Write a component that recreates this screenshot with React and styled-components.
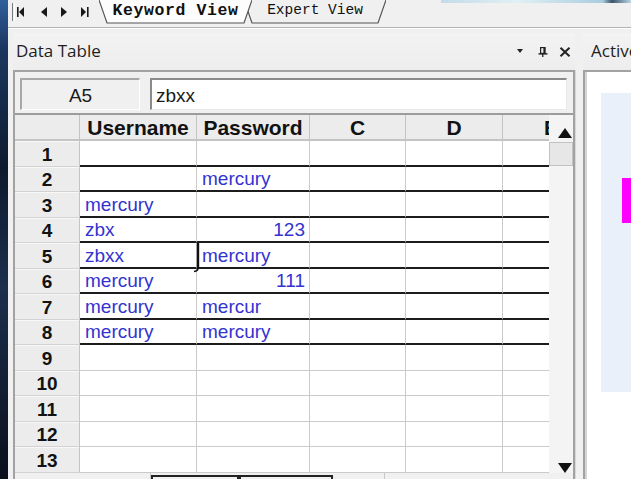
import React from "react";
import styled, { createGlobalStyle } from "styled-components";

const GlobalStyle = createGlobalStyle`
  html, body {
    margin: 0;
    padding: 0;
    overflow: hidden;
    background: #f0f0f0;
  }
  * {
    box-sizing: border-box;
  }
`;

const COLS = ["Username", "Password", "C", "D", "E"];
const ROWS = [
  ["", ""],
  ["", "mercury"],
  ["mercury", ""],
  ["zbx", "123"],
  ["zbxx", "mercury"],
  ["mercury", "111"],
  ["mercury", "mercur"],
  ["mercury", "mercury"],
  ["", ""],
  ["", ""],
  ["", ""],
  ["", ""],
  ["", ""],
];

const Screen = styled.div`
  display: flex;
  width: 631px;
  height: 479px;
  overflow: hidden;
  font-family: "Liberation Sans", Arial, sans-serif;
`;

const DesktopEdge = styled.div`
  flex: 0 0 8px;
  width: 8px;
  min-width: 8px;
  background: linear-gradient(180deg, #30609c 0%, #1b3760 10%, #0d1a2e 35%, #1c2f4c 60%, #0a101c 100%);
`;

const Window = styled.div`
  flex: 1;
  min-width: 0;
  display: flex;
  flex-direction: column;
  background: #f0f0f0;
`;

/* ---------- view tabs ---------- */

const TabBar = styled.div`
  flex: none;
  height: 27px;
  display: flex;
  align-items: flex-start;
  padding-left: 4px;
`;

const Grip = styled.div`
  width: 3px;
  height: 18px;
  margin-top: 3px;
  border-left: 1px solid #7a7a7a;
  border-right: 1px solid #ffffff;
`;

const NavGroup = styled.div`
  display: flex;
  align-items: center;
  gap: 14px;
  height: 24px;
  margin-left: 2px;
  padding-bottom: 1px;

  svg:first-child {
    margin-right: 3px;
  }
`;

const ViewTab = styled.div`
  position: relative;
  flex: none;
  width: ${(p) => p.$width}px;
  height: 24px;
  margin-left: ${(p) => p.$offset}px;
  z-index: ${(p) => (p.$active ? 2 : 1)};
  display: flex;
  justify-content: center;
  padding-top: 1px;
  font-family: "Liberation Mono", "Courier New", monospace;
  font-size: ${(p) => (p.$active ? "16.5px" : "14.5px")};
  font-weight: ${(p) => (p.$active ? 700 : 400)};
  letter-spacing: ${(p) => (p.$active ? "0.6px" : "0")};
  line-height: 19px;
  color: #111;

  svg {
    position: absolute;
    inset: 0;
    z-index: -1;
  }
`;

const ClippedToolbar = styled.div`
  margin-left: auto;
  width: 190px;
  height: 3px;
  background: linear-gradient(90deg, #c4dbe9, #e0f0f4 40%, #a9cde0 85%, #40546a 90%, #b8d8e6);
`;

const Band = styled.div`
  flex: none;
  height: 6px;
  border-top: 1px solid #b4b4b4;
  box-shadow: inset 0 1px 0 #ffffff;
`;

/* ---------- panes ---------- */

const Panes = styled.div`
  flex: 1;
  min-height: 0;
  display: flex;
  padding-left: 5px;
`;

const DataPane = styled.div`
  flex: none;
  width: 562px;
  display: flex;
  flex-direction: column;
`;

const PaneHeader = styled.div`
  flex: none;
  height: 37px;
  display: flex;
  align-items: center;
  padding: 0 4px 2px ${(p) => p.$indent}px;
  background: linear-gradient(#f3f3f3, #ededed);
  white-space: nowrap;
`;

const PaneTitle = styled.span`
  font-family: "Open Sans", "Liberation Sans", sans-serif;
  font-size: 17px;
  color: #1e1e1e;
`;

const PaneButtons = styled.div`
  margin-left: auto;
  display: flex;
  align-items: center;
  padding-top: 2px;

  svg + svg {
    margin-left: 15px;
  }
  svg:last-child {
    margin-left: 11px;
  }
`;

const PaneBody = styled.div`
  flex: 1;
  min-height: 0;
  display: flex;
  flex-direction: column;
  border: 2px solid #a2a2a2;
  border-bottom: none;
  background: #f0f0f0;
`;

const FormulaBar = styled.div`
  flex: none;
  height: 41px;
  display: flex;
  gap: 10px;
  padding: 6px 6px 3px 5px;
`;

const CellRef = styled.div`
  width: 120px;
  display: flex;
  align-items: center;
  justify-content: center;
  border-top: 2px solid #a8a8a8;
  border-left: 2px solid #a8a8a8;
  border-right: 1px solid #ffffff;
  border-bottom: 1px solid #ffffff;
  background: #f0f0f0;
  font-size: 19px;
  color: #1a1a1a;
  padding-top: 2px;
`;

const FormulaInput = styled.div`
  flex: 1;
  display: flex;
  align-items: center;
  padding: 2px 4px 0;
  border-top: 2px solid #8a8a8a;
  border-left: 2px solid #8a8a8a;
  border-right: 1px solid #e8e8e8;
  border-bottom: 1px solid #e8e8e8;
  background: #ffffff;
  font-size: 19px;
  color: #1a1a1a;
`;

/* ---------- grid ---------- */

const SheetArea = styled.div`
  position: relative;
  flex: none;
  height: 360px;
  display: flex;
  border-top: 2px solid #9c9c9c;
`;

const Sheet = styled.div`
  width: 534px;
  overflow: hidden;
  display: grid;
  grid-template-columns: 65px 117px 113px 96px 97px 97px;
  grid-template-rows: 26px repeat(13, 25.5px);
  background: #ffffff;
`;

const HeadCell = styled.div`
  display: flex;
  align-items: flex-end;
  justify-content: center;
  background: #ececec;
  border-right: 1px solid #c4c4c4;
  border-bottom: 2px solid #c4c4c4;
  font-size: 21px;
  font-weight: 700;
  line-height: 23px;
  color: #121212;
  white-space: nowrap;
  overflow: hidden;
`;

const RowHead = styled.div`
  display: flex;
  align-items: flex-end;
  justify-content: center;
  background: #ececec;
  border-right: 1px solid #c4c4c4;
  border-bottom: 1px solid #d2d2d2;
  box-shadow: inset 0 1px 0 #f8f8f8;
  font-size: 19px;
  font-weight: 700;
  line-height: 22px;
  color: #121212;
`;

const Cell = styled.div`
  display: flex;
  align-items: flex-end;
  justify-content: ${(p) => (p.$numeric ? "flex-end" : "flex-start")};
  padding: 0 4px 0 5px;
  border-right: 1px solid #cacaca;
  border-bottom: ${(p) => (p.$marked ? "2px solid #1c1c1c" : "1px solid #cacaca")};
  font-size: 19px;
  line-height: 22px;
  color: #3333d0;
  white-space: nowrap;
  overflow: hidden;
`;

const IBeam = styled.svg`
  position: absolute;
  left: 178px;
  top: 128px;
`;

const ScrollBar = styled.div`
  width: 24px;
  display: flex;
  flex-direction: column;
  background: #f4f4f4;
`;

const ScrollButton = styled.div`
  flex: none;
  height: ${(p) => p.$height}px;
  display: flex;
  align-items: ${(p) => (p.$down ? "flex-end" : "flex-start")};
  justify-content: flex-end;
  padding: ${(p) => (p.$down ? "0 1px 0 0" : "13px 1px 0 0")};
`;

const Thumb = styled.div`
  flex: none;
  height: 24px;
  background: #e7e7e7;
  border: 1px solid #c2c2c2;
`;

const Track = styled.div`
  flex: 1;
`;

const SheetTabs = styled.div`
  flex: none;
  height: 20px;
  display: flex;
  padding-left: 65px;
  background: #f0f0f0;
`;

const SheetTab = styled.div`
  width: ${(p) => p.$width}px;
  border: ${(p) => (p.$framed ? "2px solid #222" : "none")};
  border-bottom: none;
  border-right: ${(p) => (p.$framed ? "2px solid #222" : "1px solid #c8c8c8")};
  margin-top: ${(p) => (p.$framed ? "2px" : "0")};
`;

/* ---------- right pane ---------- */

const Splitter = styled.div`
  flex: none;
  width: 8px;
  margin-top: 37px;
  border-left: 1px solid #d8d8d8;
`;

const ActivePane = styled.div`
  flex: 1;
  min-width: 0;
  display: flex;
  flex-direction: column;
`;

const ActiveBody = styled.div`
  flex: 1;
  display: flex;
  align-items: flex-start;
  padding: 21px 0 0 16px;
  background: #ffffff;
  border-top: 2px solid #a2a2a2;
  border-left: 2px solid #a2a2a2;
  box-shadow: inset 2px 0 0 #d4d4d4;
`;

const Preview = styled.div`
  flex: 1;
  height: 299px;
  padding: 85px 0 0 21px;
  background: #e9f0f9;
`;

const Marker = styled.div`
  width: 12px;
  height: 45px;
  background: #ff00ff;
`;

const Tri = ({ dir }) => {
  const pts = dir === "left" ? "6,0 6,10 0,5" : "0,0 0,10 6,5";
  return (
    <svg width="6" height="10" viewBox="0 0 6 10">
      <polygon points={pts} fill="#1a1a1a" />
    </svg>
  );
};

const TabShape = ({ width, active }) => (
  <svg width={width} height="24" viewBox={`0 0 ${width} 24`}>
    <polygon
      points={`0,0 8,23 ${width - 8},23 ${width},0`}
      fill={active ? "#fdfdfd" : "#f0f0f0"}
      stroke="none"
    />
    <polyline
      points={`0,0 8,23 ${width - 8},23 ${width},0`}
      fill="none"
      stroke="#555"
      strokeWidth="1.2"
    />
  </svg>
);

export default function App() {
  return (
    <>
      <GlobalStyle />
      <Screen>
        <DesktopEdge />
        <Window>
          <TabBar>
            <Grip />
            <NavGroup>
              <svg width="7" height="10" viewBox="0 0 7 10">
                <rect x="0" y="0" width="1.6" height="10" fill="#1a1a1a" />
                <polygon points="7,0 7,10 2,5" fill="#1a1a1a" />
              </svg>
              <Tri dir="left" />
              <Tri dir="right" />
              <svg width="8" height="10" viewBox="0 0 8 10">
                <polygon points="0,0 0,10 5,5" fill="#1a1a1a" />
                <rect x="6" y="0" width="1.6" height="10" fill="#1a1a1a" />
              </svg>
            </NavGroup>
            <ViewTab $active $width={153} $offset={10}>
              <TabShape width={153} active />
              Keyword View
            </ViewTab>
            <ViewTab $width={142} $offset={-8}>
              <TabShape width={142} />
              Expert View
            </ViewTab>
            <ClippedToolbar />
          </TabBar>
          <Band />
          <Panes>
            <DataPane>
              <PaneHeader $indent={3}>
                <PaneTitle>Data Table</PaneTitle>
                <PaneButtons>
                  <svg width="6" height="5" viewBox="0 0 6 5">
                    <polygon points="0,0 6,0 3,4" fill="#222" />
                  </svg>
                  <svg width="10" height="10" viewBox="0 0 10 10">
                    <rect x="2.6" y="0.6" width="4.4" height="5.8" fill="none" stroke="#222" strokeWidth="1.2" />
                    <rect x="5.4" y="0" width="1.8" height="6.5" fill="#222" />
                    <rect x="0.5" y="6.2" width="9" height="1.4" fill="#222" />
                    <rect x="4.1" y="7" width="1.3" height="3" fill="#222" />
                  </svg>
                  <svg width="12" height="10" viewBox="0 0 12 10">
                    <path d="M1.5 0.8 L10.5 9.2 M10.5 0.8 L1.5 9.2" stroke="#222" strokeWidth="2" />
                  </svg>
                </PaneButtons>
              </PaneHeader>
              <PaneBody>
                <FormulaBar>
                  <CellRef>A5</CellRef>
                  <FormulaInput>zbxx</FormulaInput>
                </FormulaBar>
                <SheetArea>
                  <Sheet>
                    <HeadCell />
                    {COLS.map((c) => (
                      <HeadCell key={c}>{c}</HeadCell>
                    ))}
                    {ROWS.map((row, r) => (
                      <React.Fragment key={r}>
                        <RowHead>{r + 1}</RowHead>
                        {[...row, "", "", ""].map((v, c) => (
                          <Cell key={c} $marked={r < 8} $numeric={/^\d+$/.test(v)}>
                            {v}
                          </Cell>
                        ))}
                      </React.Fragment>
                    ))}
                  </Sheet>
                  <ScrollBar>
                    <ScrollButton $height={27}>
                      <svg width="14" height="10" viewBox="0 0 14 10">
                        <polygon points="7,0 14,10 0,10" fill="#111" />
                      </svg>
                    </ScrollButton>
                    <Thumb />
                    <Track />
                    <ScrollButton $height={20} $down>
                      <svg width="14" height="10" viewBox="0 0 14 10">
                        <polygon points="0,0 14,0 7,10" fill="#111" />
                      </svg>
                    </ScrollButton>
                  </ScrollBar>
                  <IBeam width="10" height="30" viewBox="0 0 10 30">
                    <path d="M5 0 V26" stroke="#111" strokeWidth="2.4" />
                    <path d="M5 25 Q5 28 1 28.5" stroke="#111" strokeWidth="1.6" fill="none" />
                  </IBeam>
                </SheetArea>
                <SheetTabs>
                  <SheetTab $width={71} />
                  <SheetTab $framed $width={88} />
                  <SheetTab $framed $width={94} />
                  <SheetTab $width={52} />
                </SheetTabs>
              </PaneBody>
            </DataPane>
            <Splitter />
            <ActivePane>
              <PaneHeader $indent={8}>
                <PaneTitle>Active Screen</PaneTitle>
              </PaneHeader>
              <ActiveBody>
                <Preview>
                  <Marker />
                </Preview>
              </ActiveBody>
            </ActivePane>
          </Panes>
        </Window>
      </Screen>
    </>
  );
}
